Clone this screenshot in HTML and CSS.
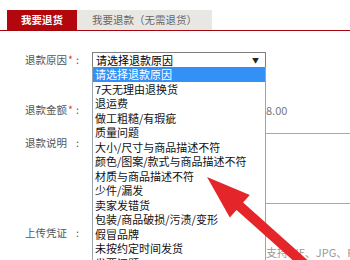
FILE: index.html
```html
<!DOCTYPE html>
<html>
<head>
<meta charset="utf-8">
<link rel="stylesheet" href="styles.css">
</head>
<body>
<div class="page">
  <div class="tabs">
    <div class="tab tab-active">我要退货</div>
    <div class="tab tab-plain">我要退款（无需退货）</div>
  </div>
  <div class="form">
    <div class="row row-reason">
      <div class="label">退款原因<span class="star">*</span><span class="colon">:</span></div>
      <div class="select"><span>请选择退款原因</span><span class="caret">▼</span></div>
    </div>
    <div class="row row-amount">
      <div class="label">退款金额<span class="star">*</span><span class="colon">:</span></div>
      <div class="amount">8.00</div>
    </div>
    <div class="row row-desc">
      <div class="label">退款说明<span class="star blank">*</span><span class="colon">:</span></div>
      <div class="textarea"></div>
    </div>
    <div class="row row-upload">
      <div class="label">上传凭证<span class="star blank">*</span><span class="colon">:</span></div>
      <div class="upload"><div class="btn"></div><div class="note">支持GIF、JPG、PNG、BMP</div></div>
    </div>
    <ul class="dropdown">
      <li class="sel">请选择退款原因</li>
      <li>7天无理由退换货</li>
      <li>退运费</li>
      <li>做工粗糙/有瑕疵</li>
      <li>质量问题</li>
      <li>大小/尺寸与商品描述不符</li>
      <li>颜色/图案/款式与商品描述不符</li>
      <li>材质与商品描述不符</li>
      <li>少件/漏发</li>
      <li>卖家发错货</li>
      <li>包装/商品破损/污渍/变形</li>
      <li>假冒品牌</li>
      <li>未按约定时间发货</li>
      <li>发票问题</li>
    </ul>
  </div>
  <svg class="arrow" width="350" height="260" viewBox="0 0 350 260">
    <polygon fill="#e4262b" points="207,177 229.8,217.5 236.5,210 352.7,313.7 359.3,306.3 243.1,202.6 249.8,195.1"/>
  </svg>
</div>
</body>
</html>
```
FILE: styles.css
```css
html, body {
  margin: 0;
  padding: 0;
  background: #fff;
}
.page {
  position: relative;
  width: 350px;
  height: 260px;
  overflow: hidden;
  font-family: "Noto Sans CJK SC", "Noto Sans", sans-serif;
  font-size: 11px;
}
.tabs {
  display: flex;
  padding: 10px 0 0 7px;
  height: 20px;
  border-bottom: 1px solid #a3070d;
}
.tab {
  height: 20px;
  line-height: 20px;
  text-align: center;
  font-size: 10.5px;
}
.tab-active {
  width: 70px;
  background: #b3070e;
  color: #fff;
  font-weight: bold;
}
.tab-plain {
  width: 135px;
  background: #e9e7e4;
  color: #666;
}
.form {
  position: relative;
  padding: 21px 0 0 25px;
}
.row {
  display: flex;
  align-items: flex-start;
}
.label {
  flex: 0 0 67px;
  width: 67px;
  color: #555;
  font-size: 10.5px;
  line-height: 16px;
  white-space: nowrap;
}
.star {
  color: #e0403f;
  margin-left: 1px;
}
.star.blank {
  visibility: hidden;
}
.colon {
  margin-left: 3px;
}
.select {
  box-sizing: border-box;
  flex: 0 0 174px;
  width: 174px;
  height: 16px;
  border: 1px solid #7f7f7f;
  display: flex;
  justify-content: space-between;
  align-items: center;
  padding: 0 6px 0 3px;
  color: #000;
  font-size: 11px;
  line-height: 14px;
}
.caret {
  font-size: 7px;
  color: #222;
}
.row-amount {
  margin-top: 34px;
}
.amount {
  flex: 0 0 auto;
  margin-left: 174px;
  color: #777;
  font-size: 11px;
  line-height: 16px;
}
.row-desc {
  margin-top: 15px;
}
.row-desc .label {
  margin-top: 2px;
}
.textarea {
  box-sizing: border-box;
  flex: 0 0 300px;
  width: 300px;
  height: 71px;
  border: 1px solid #a8a8a8;
}
.row-upload {
  margin-top: 21px;
}
.upload {
  flex: 0 0 auto;
  display: flex;
  flex-direction: column;
}
.btn {
  height: 19px;
}
.note {
  margin-left: 174px;
  color: #999;
  font-size: 11px;
  line-height: 16px;
  white-space: nowrap;
}
.dropdown {
  position: absolute;
  left: 92px;
  top: 36px;
  box-sizing: border-box;
  width: 174px;
  margin: 0;
  padding: 0;
  list-style: none;
  background: #fff;
  border: 1px solid #9aa4b0;
  border-top: none;
}
.dropdown li {
  height: 14.5px;
  line-height: 14px;
  padding-left: 2px;
  color: #111;
  font-size: 11px;
  white-space: nowrap;
}
.dropdown li.sel {
  background: #3391f5;
  color: #fff;
}
.arrow {
  position: absolute;
  left: 0;
  top: 0;
}
```
